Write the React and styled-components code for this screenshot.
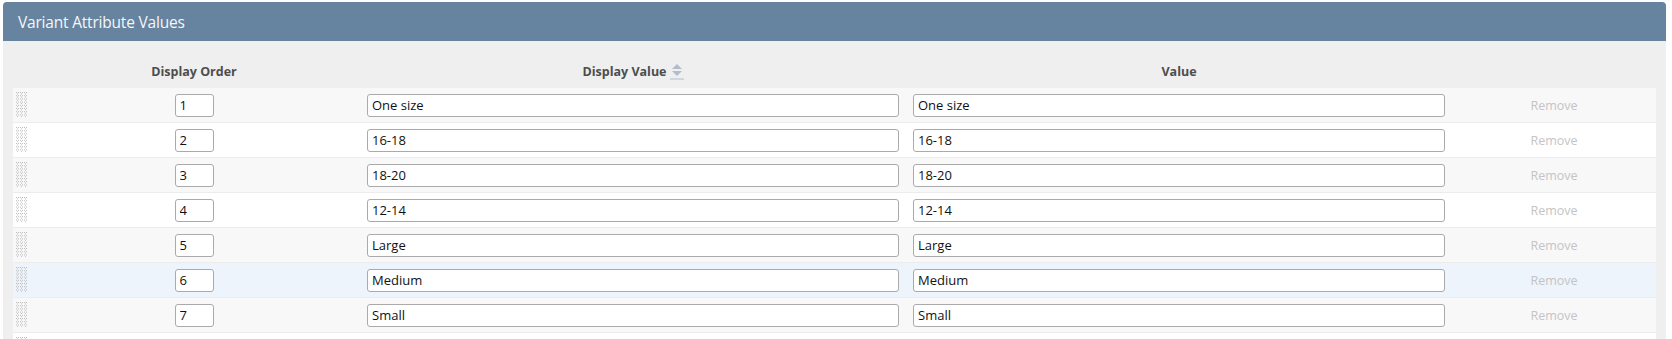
import React from "react";
import styled, { createGlobalStyle } from "styled-components";

const GlobalStyle = createGlobalStyle`
  body {
    margin: 0;
    background: #ffffff;
    font-family: "Open Sans", "Liberation Sans", sans-serif;
  }
`;

const Page = styled.div`
  padding: 2px 6px 0 3px;
`;

const Panel = styled.section`
  background: #efefef;
  border-radius: 4px 4px 0 0;
  overflow: hidden;
`;

const PanelHeader = styled.header`
  background: #66839f;
  color: #f4f7fa;
  height: 39px;
  display: flex;
  align-items: center;
  padding-left: 15px;
  font-size: 15.5px;
  letter-spacing: -0.2px;
`;

const Body = styled.div`
  padding: 0 10px;
`;

const Row = styled.div`
  display: grid;
  grid-template-columns: 15px 332px 1fr 1fr 204px;
  align-items: center;
  height: ${(p) => (p.$head ? "47px" : "35px")};
  box-sizing: border-box;
  background: ${(p) =>
    p.$head ? "transparent" : p.$active ? "#eef4fb" : p.$odd ? "#f8f8f8" : "#ffffff"};
  border-bottom: ${(p) => (p.$head ? "none" : "1px solid #ececec")};
`;

const HeadCell = styled.div`
  align-self: end;
  padding-bottom: 8px;
  text-align: center;
  font-size: 12.5px;
  font-weight: 700;
  color: #4d4d4d;
  display: flex;
  justify-content: center;
  align-items: center;
  gap: 3px;
`;

const Cell = styled.div`
  display: flex;
  justify-content: center;
  padding: 0 7px;
`;

const Input = styled.input`
  box-sizing: border-box;
  width: ${(p) => (p.$narrow ? "39px" : "100%")};
  height: 23px;
  border: 1px solid #aaaaaa;
  border-radius: 3px;
  padding: 0 4px;
  font-family: "Open Sans", "Liberation Sans", sans-serif;
  font-size: 13px;
  color: #111;
  background: #fff;
  outline: none;
`;

const RemoveLink = styled.span`
  font-size: 12.5px;
  color: #c4c4c4;
  text-align: center;
`;

const GripCell = styled.div`
  display: flex;
  justify-content: flex-start;
  padding-left: 3px;
`;

const Grip = () => (
  <svg width="12" height="26" viewBox="0 0 12 26">
    {Array.from({ length: 8 }).map((_, r) =>
      Array.from({ length: 3 }).map((_, c) => (
        <g key={`${r}-${c}`} fill="#bdbdbd">
          <rect x={c * 4} y={r * 3.2} width="1" height="1" />
          <rect x={c * 4 + 2} y={r * 3.2} width="1" height="1" />
          <rect x={c * 4 + 1} y={r * 3.2 + 1.4} width="1" height="1" />
        </g>
      ))
    )}
  </svg>
);

const SortIcon = () => (
  <svg width="14" height="17" viewBox="0 0 14 17">
    <path d="M7 1 L12 6 L2 6 Z" fill="#b4bccb" />
    <path d="M7 13 L12 8 L2 8 Z" fill="#b4bccb" />
    <rect x="0" y="15.5" width="14" height="1" fill="#b4bccb" />
  </svg>
);

const rows = ["One size", "16-18", "18-20", "12-14", "Large", "Medium", "Small", ""];

export default function App() {
  return (
    <Page>
      <GlobalStyle />
      <Panel>
        <PanelHeader>Variant Attribute Values</PanelHeader>
        <Body>
          <Row $head>
            <div />
            <HeadCell>Display Order</HeadCell>
            <HeadCell>
              Display Value <SortIcon />
            </HeadCell>
            <HeadCell>Value</HeadCell>
            <div />
          </Row>
          {rows.map((v, i) => (
            <Row key={i} $odd={i % 2 === 0} $active={i === 5}>
              <GripCell>
                <Grip />
              </GripCell>
              <Cell>
                <Input $narrow defaultValue={String(i + 1)} />
              </Cell>
              <Cell>
                <Input defaultValue={v} />
              </Cell>
              <Cell>
                <Input defaultValue={v} />
              </Cell>
              <Cell>
                <RemoveLink>Remove</RemoveLink>
              </Cell>
            </Row>
          ))}
        </Body>
      </Panel>
    </Page>
  );
}
